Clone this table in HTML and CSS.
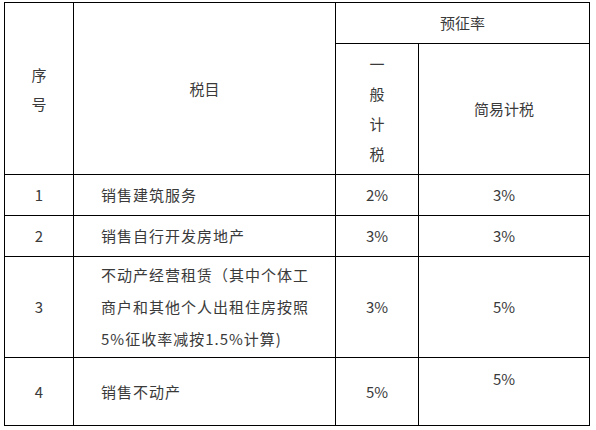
FILE: index.html
```html
<!DOCTYPE html>
<html lang="zh-CN">
<head>
<meta charset="utf-8">
<title>预征率</title>
<link rel="stylesheet" href="styles.css">
</head>
<body>
<div class="wrap">
<table class="rates">
  <colgroup>
    <col class="c1"><col class="c2"><col class="c3"><col class="c4">
  </colgroup>
  <tr class="h1">
    <td rowspan="2" class="center stack">序<br>号</td>
    <td rowspan="2" class="center">税目</td>
    <td colspan="2" class="center">预征率</td>
  </tr>
  <tr class="h2">
    <td class="center vert">一<br>般<br>计<br>税</td>
    <td class="center">简易计税</td>
  </tr>
  <tr class="r1">
    <td class="center">1</td>
    <td class="item">销售建筑服务</td>
    <td class="center">2%</td>
    <td class="center">3%</td>
  </tr>
  <tr class="r2">
    <td class="center">2</td>
    <td class="item">销售自行开发房地产</td>
    <td class="center">3%</td>
    <td class="center">3%</td>
  </tr>
  <tr class="r3">
    <td class="center">3</td>
    <td class="item multi">不动产经营租赁（其中个体工商户和其他个人出租住房按照5%征收率减按1.5%计算)</td>
    <td class="center">3%</td>
    <td class="center">5%</td>
  </tr>
  <tr class="r4">
    <td class="center">4</td>
    <td class="item">销售不动产</td>
    <td class="center">5%</td>
    <td class="center raised">5%</td>
  </tr>
</table>
</div>
</body>
</html>
```

FILE: styles.css
```css
html, body {
  margin: 0;
  padding: 0;
  background: #ffffff;
}

.wrap {
  padding: 2px 0 0 4px;
}

.rates {
  border-collapse: collapse;
  table-layout: fixed;
  width: 586px;
  font-family: "Noto Sans CJK SC", "Noto Sans", sans-serif;
  font-size: 15px;
  color: #3a3a3a;
}

.c1 { width: 69px; }
.c2 { width: 262px; }
.c3 { width: 83px; }
.c4 { width: 171px; }

.rates td {
  border: 1px solid #000;
  padding: 0;
  vertical-align: middle;
  line-height: 20px;
}

.center { text-align: center; }

.stack { line-height: 29px !important; }

.vert { line-height: 30px !important; }

.item {
  text-align: left;
  padding: 0 26px 0 27px !important;
  letter-spacing: 1px;
}

.multi { line-height: 32px !important; }

.raised { padding-bottom: 26px !important; }

.h1 { height: 41px; }
.h2 { height: 131px; }
.r1 { height: 41px; }
.r2 { height: 41px; }
.r3 { height: 101px; }
.r4 { height: 68px; }
```
